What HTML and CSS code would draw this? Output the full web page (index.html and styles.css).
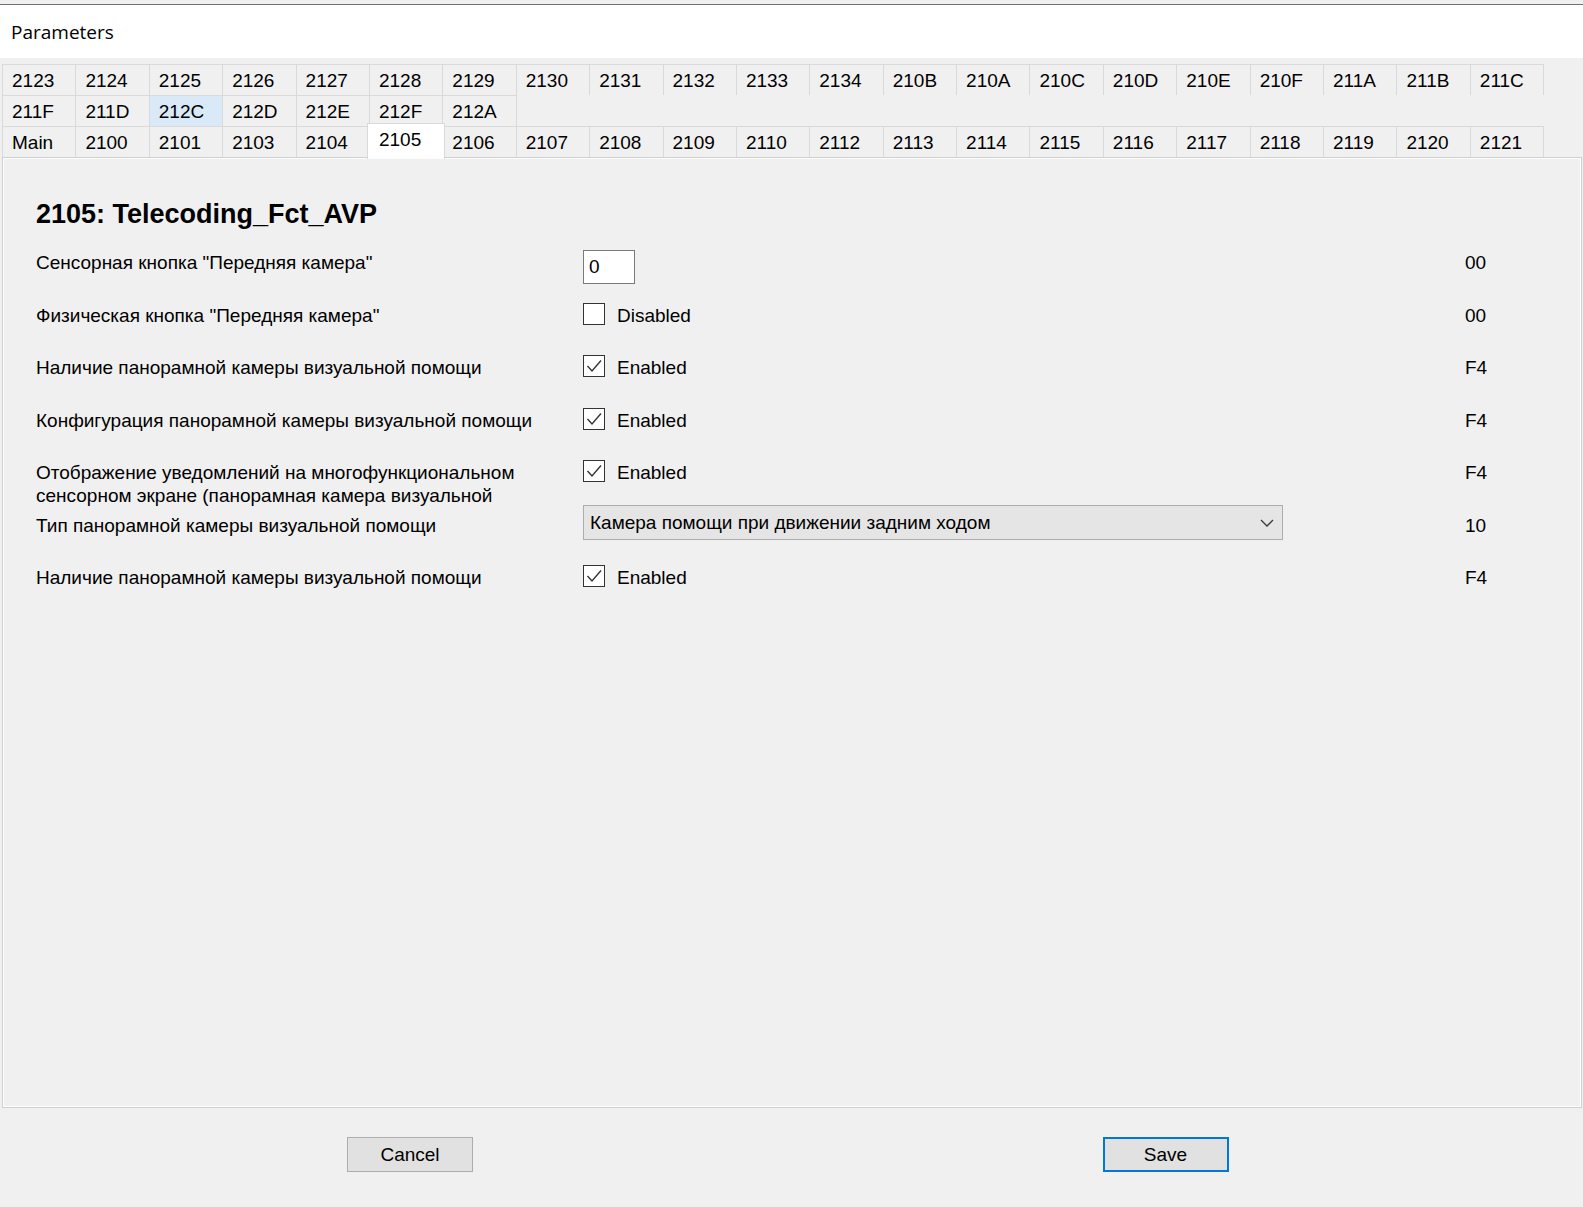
FILE: index.html
```html
<!DOCTYPE html>
<html lang="ru">
<head>
  <meta charset="UTF-8">
  <title>Parameters</title>
  <link rel="stylesheet" href="styles.css">
</head>
<body>
  <div class="window">
    <div class="caption">Parameters</div>

    <!-- вкладки блоков, выбранный ряд всегда снизу -->
    <div class="tabs">
      <div class="tab-row">
        <div class="tab">2123</div>
        <div class="tab">2124</div>
        <div class="tab">2125</div>
        <div class="tab">2126</div>
        <div class="tab">2127</div>
        <div class="tab">2128</div>
        <div class="tab">2129</div>
        <div class="tab">2130</div>
        <div class="tab">2131</div>
        <div class="tab">2132</div>
        <div class="tab">2133</div>
        <div class="tab">2134</div>
        <div class="tab">210B</div>
        <div class="tab">210A</div>
        <div class="tab">210C</div>
        <div class="tab">210D</div>
        <div class="tab">210E</div>
        <div class="tab">210F</div>
        <div class="tab">211A</div>
        <div class="tab">211B</div>
        <div class="tab">211C</div>
      </div>
      <div class="tab-row">
        <div class="tab">211F</div>
        <div class="tab">211D</div>
        <div class="tab hover">212C</div>
        <div class="tab">212D</div>
        <div class="tab">212E</div>
        <div class="tab">212F</div>
        <div class="tab">212A</div>
      </div>
      <div class="tab-row">
        <div class="tab">Main</div>
        <div class="tab">2100</div>
        <div class="tab">2101</div>
        <div class="tab">2103</div>
        <div class="tab">2104</div>
        <div class="tab active">2105</div>
        <div class="tab">2106</div>
        <div class="tab">2107</div>
        <div class="tab">2108</div>
        <div class="tab">2109</div>
        <div class="tab">2110</div>
        <div class="tab">2112</div>
        <div class="tab">2113</div>
        <div class="tab">2114</div>
        <div class="tab">2115</div>
        <div class="tab">2116</div>
        <div class="tab">2117</div>
        <div class="tab">2118</div>
        <div class="tab">2119</div>
        <div class="tab">2120</div>
        <div class="tab">2121</div>
      </div>
    </div>

    <!-- страница блока 2105 -->
    <div class="page">
      <h2 class="page-title">2105: Telecoding_Fct_AVP</h2>

      <div class="param">
        <div class="param-name">Сенсорная кнопка "Передняя камера"</div>
        <div class="param-control"><input class="num" value="0"></div>
        <div class="param-hex">00</div>
      </div>

      <div class="param">
        <div class="param-name">Физическая кнопка "Передняя камера"</div>
        <div class="param-control">
          <div class="check"><span class="box"></span><span>Disabled</span></div>
        </div>
        <div class="param-hex">00</div>
      </div>

      <div class="param">
        <div class="param-name">Наличие панорамной камеры визуальной помощи</div>
        <div class="param-control">
          <div class="check">
            <span class="box"><svg width="20" height="20" viewBox="0 0 20 20"><path d="M3.5 10 L8 15 L17 4.5"/></svg></span>
            <span>Enabled</span>
          </div>
        </div>
        <div class="param-hex">F4</div>
      </div>

      <div class="param">
        <div class="param-name">Конфигурация панорамной камеры визуальной помощи</div>
        <div class="param-control">
          <div class="check">
            <span class="box"><svg width="20" height="20" viewBox="0 0 20 20"><path d="M3.5 10 L8 15 L17 4.5"/></svg></span>
            <span>Enabled</span>
          </div>
        </div>
        <div class="param-hex">F4</div>
      </div>

      <div class="param">
        <div class="param-name">Отображение уведомлений на многофункциональном сенсорном экране (панорамная камера визуальной</div>
        <div class="param-control">
          <div class="check">
            <span class="box"><svg width="20" height="20" viewBox="0 0 20 20"><path d="M3.5 10 L8 15 L17 4.5"/></svg></span>
            <span>Enabled</span>
          </div>
        </div>
        <div class="param-hex">F4</div>
      </div>

      <div class="param">
        <div class="param-name">Тип панорамной камеры визуальной помощи</div>
        <div class="param-control">
          <div class="combo">
            <span>Камера помощи при движении задним ходом</span>
            <svg width="14" height="8" viewBox="0 0 14 8"><path d="M1 1 L7 7 L13 1"/></svg>
          </div>
        </div>
        <div class="param-hex">10</div>
      </div>

      <div class="param">
        <div class="param-name">Наличие панорамной камеры визуальной помощи</div>
        <div class="param-control">
          <div class="check">
            <span class="box"><svg width="20" height="20" viewBox="0 0 20 20"><path d="M3.5 10 L8 15 L17 4.5"/></svg></span>
            <span>Enabled</span>
          </div>
        </div>
        <div class="param-hex">F4</div>
      </div>
    </div>

    <div class="footer">
      <button class="btn">Cancel</button>
      <button class="btn default">Save</button>
    </div>
  </div>
</body>
</html>
```

FILE: styles.css
```css
body {
  margin: 0;
  background: #f0f0f0;
  font-family: "Liberation Sans", Arial, sans-serif;
  font-size: 19px;
  color: #000;
}

.window {
  margin-top: 4px;
  border-top: 1px solid #707070;
}

.caption {
  display: flex;
  align-items: center;
  height: 53px;
  padding-left: 11px;
  background: #fff;
  font-family: "Open Sans", "Noto Sans", sans-serif;
  font-size: 19px;
}

/* tabs */
.tabs {
  padding: 6px 0 0 2px;
}

.tab-row {
  display: flex;
  height: 31px;
}

.tab {
  box-sizing: border-box;
  width: 74.4px;
  height: 31px;
  margin-right: -1px;
  padding-left: 9px;
  border: 1px solid #d9d9d9;
  border-bottom: none;
  line-height: 31px;
  white-space: nowrap;
}

.tab.hover {
  background: #d9e9f8;
}

.tab.active {
  position: relative;
  z-index: 1;
  width: 78.4px;
  height: 36px;
  margin: -3px -3px -2px -2px;
  padding-left: 11px;
  background: #fff;
}

/* page */
.page {
  box-sizing: border-box;
  width: 1580px;
  height: 951px;
  margin-left: 2px;
  padding: 40px 0 0 33px;
  border: 1px solid #cfcfcf;
  box-shadow: inset 0 0 0 1px #fff;
}

.page-title {
  margin: 0 0 21px;
  font-size: 27px;
  line-height: 32px;
  font-weight: bold;
}

.param {
  display: grid;
  grid-template-columns: 547px 882px auto;
  height: 52.5px;
}

.param-name {
  width: 525px;
  line-height: 23px;
}

.param-hex {
  line-height: 23px;
}

.check {
  display: flex;
  align-items: flex-start;
  gap: 12px;
  line-height: 23px;
}

.box {
  box-sizing: border-box;
  width: 22px;
  height: 22px;
  margin-top: -1px;
  border: 1px solid #333;
  background: #fff;
}

.box svg {
  display: block;
}

.box path {
  fill: none;
  stroke: #333;
  stroke-width: 1.4;
}

.num {
  box-sizing: border-box;
  width: 52px;
  height: 34px;
  margin: -1px 0 0;
  padding: 0 5px;
  border: 1px solid #7a7a7a;
  background: #fff;
  font: inherit;
  color: #000;
  outline: none;
}

.combo {
  box-sizing: border-box;
  display: flex;
  align-items: center;
  justify-content: space-between;
  width: 700px;
  height: 35px;
  margin-top: -8.5px;
  padding: 0 8px 0 6px;
  border: 1px solid #adadad;
  background: #e5e5e5;
}

.combo path {
  fill: none;
  stroke: #3a3a3a;
  stroke-width: 1.3;
}

/* buttons */
.footer {
  display: flex;
  gap: 629.5px;
  padding: 29px 0 0 347px;
}

.btn {
  box-sizing: border-box;
  width: 126px;
  height: 35px;
  padding: 0;
  border: 1px solid #adadad;
  background: #e1e1e1;
  font: inherit;
  color: #000;
}

.btn.default {
  border: 2px solid #0078d7;
}
```
